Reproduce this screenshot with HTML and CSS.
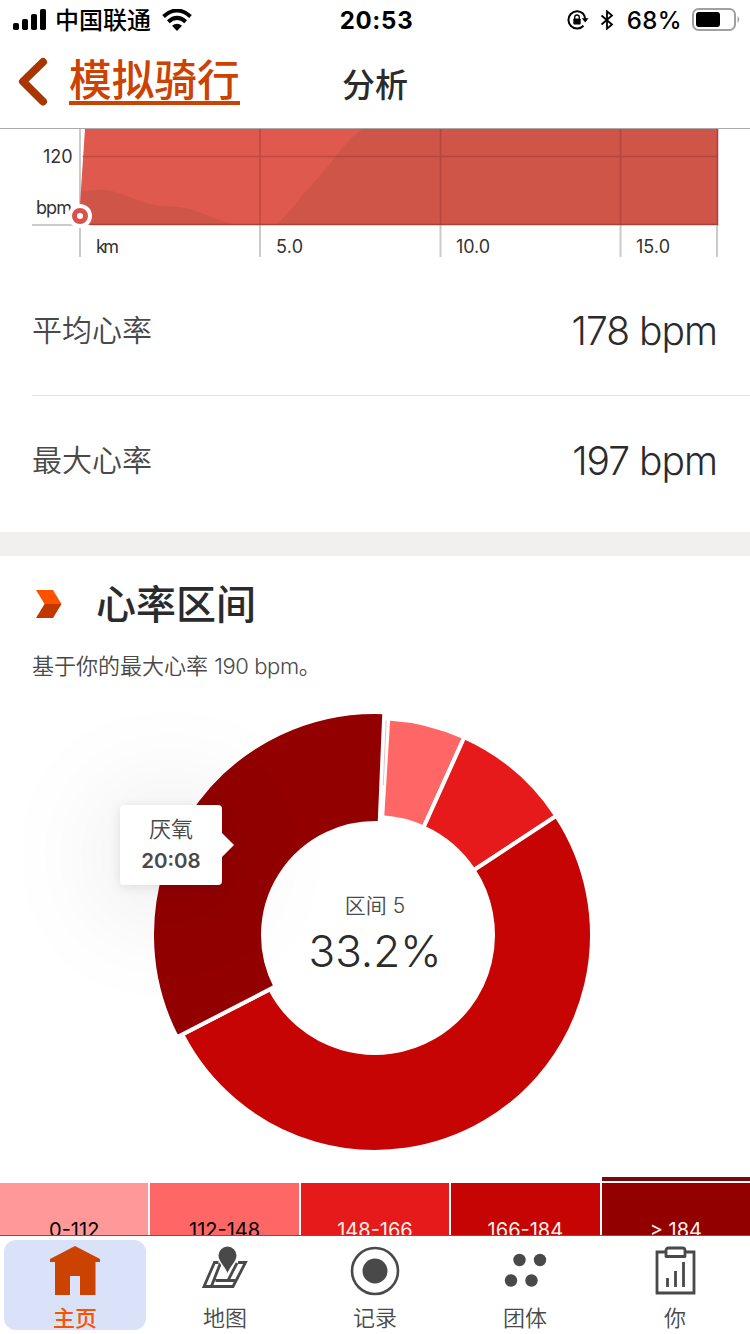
FILE: index.html
```html
<!DOCTYPE html>
<html lang="zh-CN">
<head>
    <meta charset="UTF-8">
    <meta name="viewport" content="width=device-width, initial-scale=1.0">
    <title>分析</title>
    <link rel="stylesheet" href="styles.css">
</head>
<body>
<div class="screen">
    <header class="status">
        <div class="status-left">
            <svg width="34" height="22" viewBox="0 0 34 22">
                <rect x="0" y="14" width="6" height="7" rx="1.8"/>
                <rect x="9" y="10" width="6" height="11" rx="1.8"/>
                <rect x="18" y="5" width="6" height="16" rx="1.8"/>
                <rect x="27" y="0" width="6" height="21" rx="1.8"/>
            </svg>
            <span class="carrier">中国联通</span>
            <svg width="30" height="22" viewBox="0 0 30 22">
                <path d="M1.5 7.500Q15 -4.500 28.500 7.500" fill="none" stroke="#000" stroke-width="4"/>
                <path d="M6.300 12.700Q15 5 23.700 12.700" fill="none" stroke="#000" stroke-width="4"/>
                <path d="M10 16.800Q15 12.800 20 16.800L15 22Z"/>
            </svg>
        </div>
        <div class="clock">20:53</div>
        <div class="status-right">
            <svg width="22" height="20" viewBox="0 0 22 20">
                <path d="M16 3.400A8.700 8.700 0 1 0 16.500 15.800M15.500 3A8.700 8.700 0 0 1 18.200 9" fill="none" stroke="#000" stroke-width="2"/>
                <path d="M14.800 8.200H21.500L18.200 12.500Z"/>
                <rect x="6.300" y="8.500" width="7.400" height="6" rx="1"/>
                <path d="M7.700 9V7.300A2.300 2.300 0 0 1 12.300 7.300V9" fill="none" stroke="#000" stroke-width="1.300"/>
            </svg>
            <svg class="bluetooth" width="14" height="20" viewBox="0 0 14 20">
                <path d="M1.500 5.500L12 14.500L7 18.700V1.300L12 5.500L1.500 14.500" fill="none" stroke="#000" stroke-width="1.800"/>
            </svg>
            <span class="percent">68%</span>
            <svg width="48" height="24" viewBox="0 0 48 24">
                <rect x="1" y="1" width="42" height="21" rx="5.500" fill="#fff" stroke="#a0a0a0" stroke-width="2"/>
                <rect x="4" y="4" width="24" height="15" rx="3"/>
                <path d="M45.500 8Q49 11.500 45.500 15Z" fill="#a0a0a0"/>
            </svg>
        </div>
    </header>

    <nav class="nav">
        <a class="back">
            <svg width="32" height="50" viewBox="0 0 32 50">
                <path d="M27 5L7 24.500L27 44.500" fill="none" stroke="#a83600" stroke-width="8" stroke-linecap="round" stroke-linejoin="round"/>
            </svg>
            <span class="back-text">模拟骑行</span>
        </a>
        <h1 class="nav-title">分析</h1>
    </nav>

    <svg class="chart" width="750" height="137" viewBox="0 129 750 137">
        <path d="M80 129V257M260 129V257M440.500 129V257M620.500 129V257M717 129V257M32 225H80" stroke="#cbcbcb" stroke-width="2"/>
        <path d="M85 129H718V225H80V204Z" fill="#df594e"/>
        <path d="M81 192C100 188 110 189 130 197S155 206 173 206.500C195 207 205 218 238 225H81Z" fill="#cf5549"/>
        <path d="M276 225C292 211 300 196 319 177C335 159 342 145 362 129H718V225Z" fill="#cf5549"/>
        <path d="M82 156.500H718M260 129V225M440.500 129V225M620.500 129V225" stroke="#7f231f" stroke-opacity=".3" stroke-width="1.600"/>
        <path d="M90 224.500H717.500V129" fill="none" stroke="#a9403a" stroke-width="1.500"/>
        <g class="chart-text">
            <text x="43" y="163">120</text>
            <text x="36" y="214" textLength="36">bpm</text>
            <text x="96" y="253" textLength="23">km</text>
            <text x="276" y="253" textLength="27">5.0</text>
            <text x="456" y="253" textLength="34">10.0</text>
            <text x="636" y="253" textLength="34">15.0</text>
        </g>
        <circle cx="80" cy="216" r="12" fill="#fff"/>
        <circle cx="80" cy="216" r="5.500" fill="#fff" stroke="#d9534c" stroke-width="5"/>
    </svg>

    <section class="stats">
        <div class="stat">
            <span class="stat-label">平均心率</span>
            <span class="stat-value">178 bpm</span>
        </div>
        <div class="stat">
            <span class="stat-label">最大心率</span>
            <span class="stat-value">197 bpm</span>
        </div>
    </section>

    <section class="zones">
        <div class="zones-head">
            <svg width="26" height="28" viewBox="0 0 26 28">
                <path d="M0 0H17L25.500 14H8.500Z" fill="#fc5200"/>
                <path d="M8.500 14H25.500L17 28H0Z" fill="#c23600"/>
            </svg>
            <h2>心率区间</h2>
        </div>
        <p class="zones-note">基于你的最大心率 <span>190 bpm</span>。</p>

        <div class="donut">
            <svg width="450" height="450" viewBox="-225 -225 450 450">
                <g stroke="#fff" stroke-width="4">
                    <path fill="#ff6666" d="M13.250 -216.590A217 217 0 0 1 89.300 -197.770L48.560 -107.550A118 118 0 0 0 7.200 -117.780Z"/>
                    <path fill="#e61a1a" d="M89.300 -197.770A217 217 0 0 1 181.370 -119.140L98.630 -64.780A118 118 0 0 0 48.560 -107.550Z"/>
                    <path fill="#c60404" d="M181.370 -119.140A217 217 0 1 1 -192.830 99.530L-104.860 54.120A118 118 0 1 0 98.630 -64.780Z"/>
                    <path fill="#930000" d="M-198.160 102.280A223 223 0 0 1 9.340 -222.800L4.690 -111.900A112 112 0 0 0 -99.530 51.370Z"/>
                </g>
                <path d="M11.200 -214.700L8.300 -150" stroke="#e9a3a3" stroke-width=".7"/>
            </svg>
            <div class="donut-center">
                <span class="donut-zone">区间 5</span>
                <span class="donut-value">33.2%</span>
            </div>
            <div class="tooltip">
                <span>厌氧</span>
                <b>20:08</b>
            </div>
        </div>

        <div class="legend">
            <div class="zone z1">0-112</div>
            <div class="zone z2">112-148</div>
            <div class="zone z3">148-166</div>
            <div class="zone z4">166-184</div>
            <div class="zone z5 active">&gt; 184</div>
        </div>
    </section>

    <footer class="tabs">
        <div class="tab selected">
            <svg width="50" height="50" viewBox="0 0 50 50">
                <path d="M25 0L50 13V16H45.500V49H30V30H20V49H5V16H0V13Z" fill="#cc4200"/>
            </svg>
            <span>主页</span>
        </div>
        <div class="tab">
            <svg width="50" height="50" viewBox="0 0 50 50">
                <path d="M18.500 16.500H14.500L4 40.500H33L45.500 16.500H38M20.500 17L11.500 40M15.500 34.500H35M37 17L28 34.500" fill="none" stroke="#494949" stroke-width="2.800"/>
                <path d="M27.500 27C25 20 18.500 15.500 18.500 9.500A9 9 0 0 1 36.500 9.500C36.500 15.500 30 20 27.500 27Z" fill="#494949" stroke="#fff" stroke-width="3" paint-order="stroke"/>
            </svg>
            <span>地图</span>
        </div>
        <div class="tab">
            <svg width="50" height="50" viewBox="0 0 50 50">
                <circle cx="25" cy="25" r="23" fill="none" stroke="#494949" stroke-width="2.600"/>
                <circle cx="25" cy="25" r="12.500" fill="#494949"/>
            </svg>
            <span>记录</span>
        </div>
        <div class="tab">
            <svg width="50" height="50" viewBox="0 0 50 50" fill="#494949">
                <circle cx="19.500" cy="14" r="6.200"/>
                <circle cx="40" cy="14" r="6.200"/>
                <circle cx="11" cy="34.500" r="6.200"/>
                <circle cx="31.500" cy="34.500" r="6.200"/>
            </svg>
            <span>团体</span>
        </div>
        <div class="tab">
            <svg width="50" height="50" viewBox="0 0 50 50" fill="none" stroke="#494949">
                <path d="M16 6H7V47H44V6H35" stroke-width="2.800"/>
                <path d="M16 10.500V4.500Q16 2 18.500 2H32.500Q35 2 35 4.500V10.500Z" stroke-width="2.800" stroke-linejoin="round"/>
                <path d="M17.500 41V32M25.500 41V25M33.500 41V16" stroke-width="2.800"/>
            </svg>
            <span>你</span>
        </div>
    </footer>
</div>
</body>
</html>
```
FILE: styles.css
```css
* {
    box-sizing: border-box;
}
body {
    margin: 0;
    background: #fff;
    color: #2b2b2d;
    font-family: Inter, "Noto Sans CJK SC", sans-serif;
}
svg {
    display: block;
    flex: none;
}
h1, h2, p {
    margin: 0;
}
.screen {
    width: 750px;
    height: 1334px;
    overflow: hidden;
    display: flex;
    flex-direction: column;
}

/* status bar */
.status {
    height: 40px;
    flex: none;
    display: grid;
    grid-template-columns: 1fr 100px 1fr;
    align-items: center;
    color: #000;
    padding: 0 10px 0 13px;
}
.status-left, .status-right {
    display: flex;
    align-items: center;
}
.status-right {
    justify-content: flex-end;
}
.carrier {
    font-size: 24px;
    line-height: 34px;
    padding-top: 2px;
    font-weight: 500;
    margin: 0 11px 0 8px;
}
.clock {
    font-size: 24px;
    line-height: 32px;
    padding-top: 2px;
    font-weight: 700;
    letter-spacing: .7px;
    text-align: center;
}
.bluetooth {
    margin-left: 11px;
}
.percent {
    font-size: 24px;
    line-height: 32px;
    padding-top: 2px;
    font-weight: 500;
    letter-spacing: .4px;
    margin: 0 10px 0 13px;
}

/* navigation */
.nav {
    height: 89px;
    flex: none;
    display: grid;
    grid-template-columns: 1fr 100px 1fr;
    align-items: center;
    padding: 0 16px;
    border-bottom: 1px solid #a9a9a9;
}
.back {
    display: flex;
    align-items: center;
    color: #cc4200;
    padding-bottom: 5px;
}
.back-text {
    font-size: 42.7px;
    line-height: 44px;
    height: 46px;
    font-weight: 500;
    margin: 0 0 -1px 21px;
    border-bottom: 4px solid #cc4200;
}
.nav-title {
    font-size: 33px;
    font-weight: 500;
    text-align: center;
    padding-bottom: 3px;
}

/* heart rate chart */
.chart {
    background: #fff;
}
.chart-text {
    font-size: 18px;
    fill: #333;
}

/* totals */
.stats {
    height: 266px;
    flex: none;
    padding-left: 32px;
}
.stat {
    height: 130px;
    display: flex;
    justify-content: space-between;
    align-items: center;
    padding-right: 33px;
    border-bottom: 1px solid #e3e3e3;
}
.stat:last-child {
    height: 129px;
    border-bottom: 0;
}
.stat-label {
    font-size: 30px;
    font-weight: 350;
    color: #494949;
    padding-bottom: 5px;
}
.stat-value {
    font-size: 39px;
    font-weight: 350;
    letter-spacing: -1px;
    padding-bottom: 1px;
}

/* zones */
.zones {
    flex: 1;
    min-height: 0;
    overflow: hidden;
    border-top: 24px solid #f2f0ef;
}
.zones-head {
    display: flex;
    align-items: center;
    height: 95px;
    padding: 0 36px;
    gap: 34px;
}
.zones-head h2 {
    font-size: 40px;
    font-weight: 500;
    padding-bottom: 4px;
}
.zones-note {
    padding-left: 32px;
    font-size: 22px;
    line-height: 30px;
    height: 32px;
    font-weight: 350;
    color: #494949;
}
.zones-note span {
    letter-spacing: -.4px;
    font-weight: 300;
}
.donut {
    position: relative;
    width: 450px;
    height: 450px;
    margin: 27px auto 0;
}
.donut-center {
    position: absolute;
    inset: 0;
    display: flex;
    flex-direction: column;
    align-items: center;
    justify-content: center;
    padding-bottom: 1px;
}
.donut-zone {
    font-size: 21px;
    line-height: 32px;
    font-weight: 350;
    color: #494949;
}
.donut-value {
    font-size: 44px;
    line-height: 58px;
    font-weight: 350;
}
.tooltip {
    position: absolute;
    left: -30px;
    top: 95px;
    width: 102px;
    height: 80px;
    display: flex;
    flex-direction: column;
    align-items: center;
    justify-content: center;
    background: #fff;
    border-radius: 4px;
    box-shadow: 0 2px 12px rgba(0, 0, 0, .1), 0 10px 120px rgba(0, 0, 0, .15);
    font-size: 22px;
    line-height: 32px;
    font-weight: 350;
    color: #494949;
}
.tooltip b {
    font-size: 20.5px;
    font-weight: 600;
}
.tooltip::after {
    content: "";
    position: absolute;
    left: 100%;
    top: 28px;
    border: 12px solid transparent;
    border-left-color: #fff;
    border-right: 0;
}
.legend {
    display: grid;
    grid-template-columns: repeat(5, 1fr);
    column-gap: 2px;
    margin-top: 23px;
}
.zone {
    position: relative;
    height: 90px;
    padding-top: 35px;
    text-align: center;
    font-size: 20px;
    line-height: 24px;
    color: #fff0e8;
}
.z1 {
    background: #ff9999;
    color: #000;
}
.z2 {
    background: #ff6666;
    color: #000;
}
.z3 {
    background: #e61a1a;
}
.z4 {
    background: #c60404;
}
.z5 {
    background: #930000;
}
.zone.active::before {
    content: "";
    position: absolute;
    left: 0;
    right: 0;
    top: -6px;
    height: 4px;
    background: #7d080b;
}

/* tab bar */
.tabs {
    height: 99px;
    flex: none;
    display: grid;
    grid-template-columns: repeat(5, 1fr);
    border-top: 1px solid #7a5050;
    background: #fff;
}
.tab {
    display: flex;
    flex-direction: column;
    align-items: center;
    height: 90px;
    margin: 4px 4px 0;
    padding-top: 6px;
    border-radius: 12px;
    font-size: 22px;
    line-height: 32px;
    font-weight: 350;
    color: #494949;
}
.tab span {
    margin-top: 6px;
}
.tab.selected {
    background: #d9e2f9;
    color: #fc5200;
    font-weight: 500;
}
```
